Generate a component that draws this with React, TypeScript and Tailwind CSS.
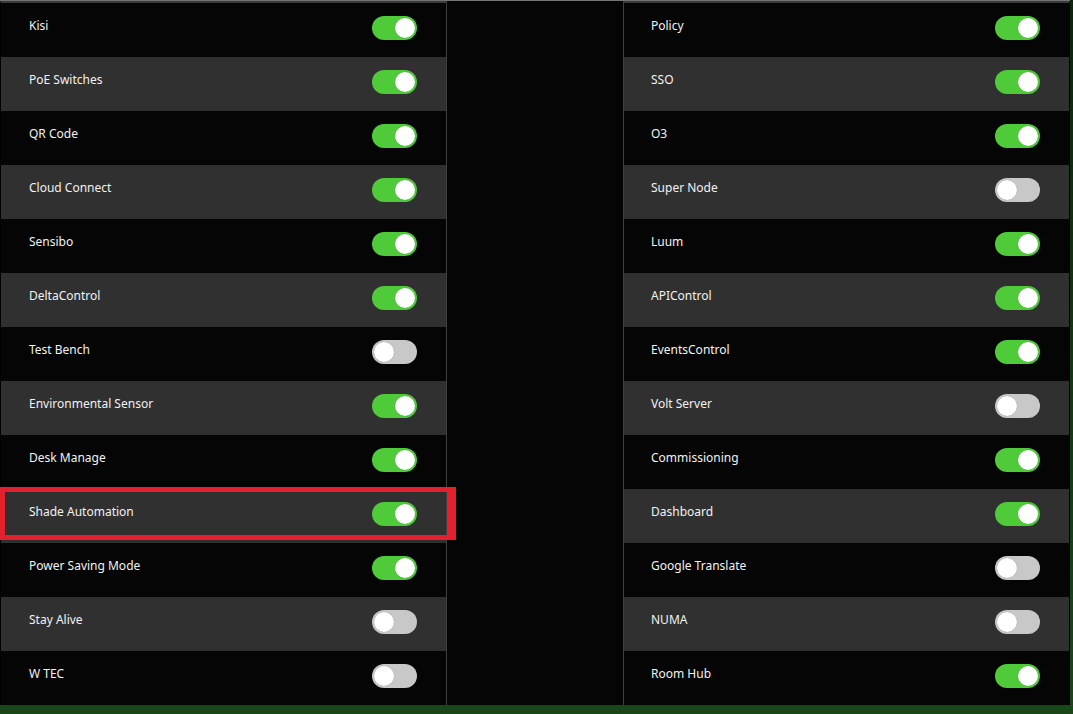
import React from 'react';

type Feature = { name: string; on: boolean };

const left: Feature[] = [
  { name: 'Kisi', on: true },
  { name: 'PoE Switches', on: true },
  { name: 'QR Code', on: true },
  { name: 'Cloud Connect', on: true },
  { name: 'Sensibo', on: true },
  { name: 'DeltaControl', on: true },
  { name: 'Test Bench', on: false },
  { name: 'Environmental Sensor', on: true },
  { name: 'Desk Manage', on: true },
  { name: 'Shade Automation', on: true },
  { name: 'Power Saving Mode', on: true },
  { name: 'Stay Alive', on: false },
  { name: 'W TEC', on: false },
];

const right: Feature[] = [
  { name: 'Policy', on: true },
  { name: 'SSO', on: true },
  { name: 'O3', on: true },
  { name: 'Super Node', on: false },
  { name: 'Luum', on: true },
  { name: 'APIControl', on: true },
  { name: 'EventsControl', on: true },
  { name: 'Volt Server', on: false },
  { name: 'Commissioning', on: true },
  { name: 'Dashboard', on: true },
  { name: 'Google Translate', on: false },
  { name: 'NUMA', on: false },
  { name: 'Room Hub', on: true },
];

function Toggle({ on }: { on: boolean }) {
  return (
    <div
      className={`w-[45px] h-[24px] rounded-full p-[2px] flex ${
        on ? 'bg-[#4fcb3a] justify-end' : 'bg-[#c8c8c8] justify-start'
      }`}
    >
      <div className="w-[20px] h-[20px] rounded-full bg-white shadow-[0_0_1px_rgba(0,0,0,0.3)]" />
    </div>
  );
}

function Column({ items, side }: { items: Feature[]; side: 'left' | 'right' }) {
  return (
    <div
      className={`w-[447px] flex flex-col border-t-2 border-t-[#3a3a3a] ${
        side === 'left'
          ? 'border-l border-l-black border-r border-r-[#3f3f3f]'
          : 'border-l border-l-[#3f3f3f] border-r border-r-black'
      }`}
    >
      {items.map((f, i) => (
        <div
          key={f.name}
          className={`h-[54px] flex items-center justify-between pb-1 ${
            side === 'left' ? 'pl-7 pr-[29px]' : 'pl-[27px] pr-[29px]'
          } ${i % 2 === 1 ? 'bg-[#303030]' : 'bg-[#050505]'}`}
        >
          <span className="text-[12px] text-[#f2f2f2] -mt-[5px]">{f.name}</span>
          <Toggle on={f.on} />
        </div>
      ))}
    </div>
  );
}

export default function App() {
  return (
    <div
      className="w-[1073px] h-[714px] bg-linear-to-b from-[#0b260b] to-[#1a471a] overflow-hidden"
      style={{ fontFamily: '"Noto Sans", "Open Sans", sans-serif' }}
    >
      <div className="relative w-[1070px] h-[705px] bg-[#050505] border-t border-t-[#747474] rounded-b-[4px] flex justify-between">
        <Column items={left} side="left" />
        <Column items={right} side="right" />
        <div className="absolute left-0 top-[486px] w-[456px] h-[53px] border-[5px] border-r-[9px] border-[#e3202b]" />
      </div>
    </div>
  );
}
